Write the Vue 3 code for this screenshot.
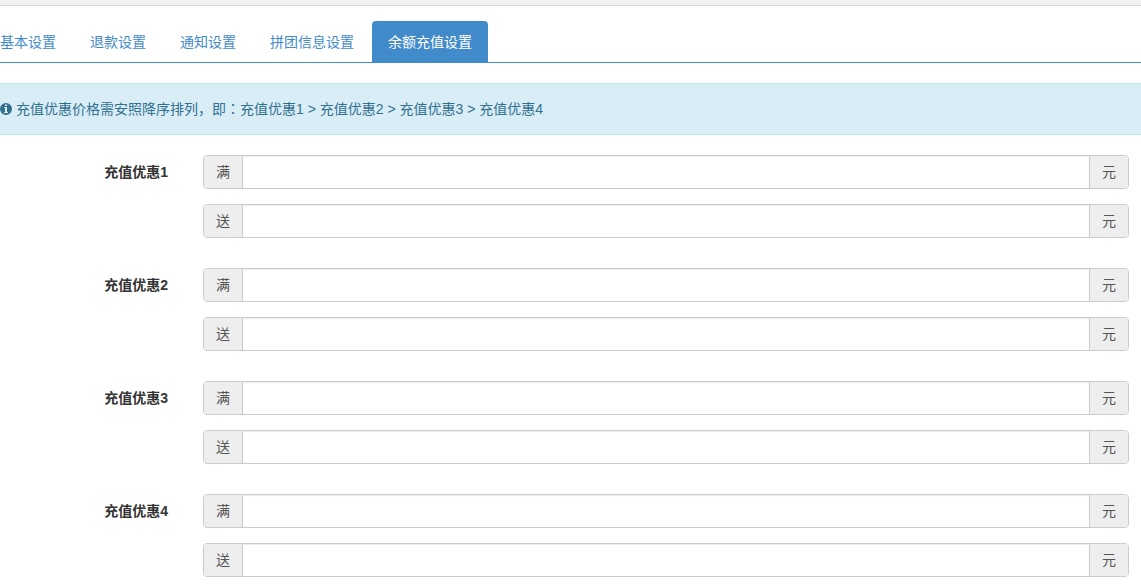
<script setup>
import { ref, reactive } from 'vue'

const tabs = ['基本设置', '退款设置', '通知设置', '拼团信息设置', '余额充值设置']
const active = ref(4)
const offers = reactive([1, 2, 3, 4].map((n) => ({ n, full: '', gift: '' })))
</script>

<template>
  <div class="page">
    <div class="strip"></div>
    <nav class="tabs">
      <a
        v-for="(tab, i) in tabs"
        :key="tab"
        href="#"
        class="tab"
        :class="{ active: i === active }"
        @click.prevent="active = i"
      >{{ tab }}</a>
    </nav>

    <div class="alert" role="note">
      <svg class="info" viewBox="0 0 12 12" aria-hidden="true">
        <path
          fill="currentColor"
          fill-rule="evenodd"
          d="M6 0a6 6 0 1 1 0 12a6 6 0 0 1 0-12zM5 1.500v1.500h2v-1.500zM4 4v1h1v4h-1v1h4v-1h-1v-5z"
        />
      </svg>
      <span>充值优惠价格需安照降序排列，即<span class="colon">：</span>充值优惠1 &gt; 充值优惠2 &gt; 充值优惠3 &gt; 充值优惠4</span>
    </div>

    <form class="form" @submit.prevent>
      <div v-for="offer in offers" :key="offer.n" class="group">
        <label class="title" :for="'full-' + offer.n">充值优惠{{ offer.n }}</label>
        <div class="fields">
          <div class="field">
            <label class="addon" :for="'full-' + offer.n">满</label>
            <input :id="'full-' + offer.n" v-model="offer.full" type="text" />
            <span class="addon">元</span>
          </div>
          <div class="field">
            <label class="addon" :for="'gift-' + offer.n">送</label>
            <input :id="'gift-' + offer.n" v-model="offer.gift" type="text" />
            <span class="addon">元</span>
          </div>
        </div>
      </div>
    </form>
  </div>
</template>

<style>
body {
  background: #fff;
  overflow: hidden;
}
</style>

<style scoped>
.page,
.page * {
  box-sizing: border-box;
}

.page {
  font-family: "Liberation Sans", "Noto Sans CJK SC", sans-serif;
  font-size: 14px;
  line-height: 20px;
  color: #333;
}

.strip {
  height: 6px;
  background: #f3f3f3;
  border-bottom: 1px solid #d9d9d9;
}

.tabs {
  display: flex;
  gap: 2px;
  margin-top: 15px;
  border-bottom: 1px solid #428bca;
}

.tab {
  padding: 11px 16px 10px;
  border-radius: 4px 4px 0 0;
  color: #428bca;
  text-decoration: none;
  white-space: nowrap;
}

.tab:first-child {
  padding-left: 0;
}

.tab.active {
  background: #428bca;
  color: #fff;
}

.alert {
  display: flex;
  align-items: center;
  gap: 4px;
  margin: 20px 0;
  padding: 15px 0;
  background: #d9edf7;
  border: solid #bce8f1;
  border-width: 1px 0;
  color: #31708f;
}

.info {
  width: 12px;
  height: 12px;
}

.colon {
  font-family: "Noto Sans CJK TC", sans-serif;
  line-height: 1;
}

.form {
  display: grid;
  gap: 30px;
  padding: 0 12px 7px 0;
}

.group {
  display: grid;
  grid-template-columns: 168px 1fr;
  column-gap: 35px;
}

.title {
  padding-top: 7px;
  font-weight: 700;
  text-align: right;
}

.fields {
  display: grid;
  gap: 15px;
}

.field {
  display: flex;
  height: 34px;
  border: 1px solid #ccc;
  border-radius: 4px;
  overflow: hidden;
}

.addon {
  flex: none;
  padding: 6px 12px;
  background: #eee;
  color: #555;
}

.field input {
  flex: 1;
  min-width: 0;
  padding: 6px 12px;
  border: solid #ccc;
  border-width: 0 1px;
  outline: none;
  background: #fff;
  box-shadow: inset 0 1px 1px rgba(0, 0, 0, 0.075);
  font: inherit;
  color: #555;
}
</style>
